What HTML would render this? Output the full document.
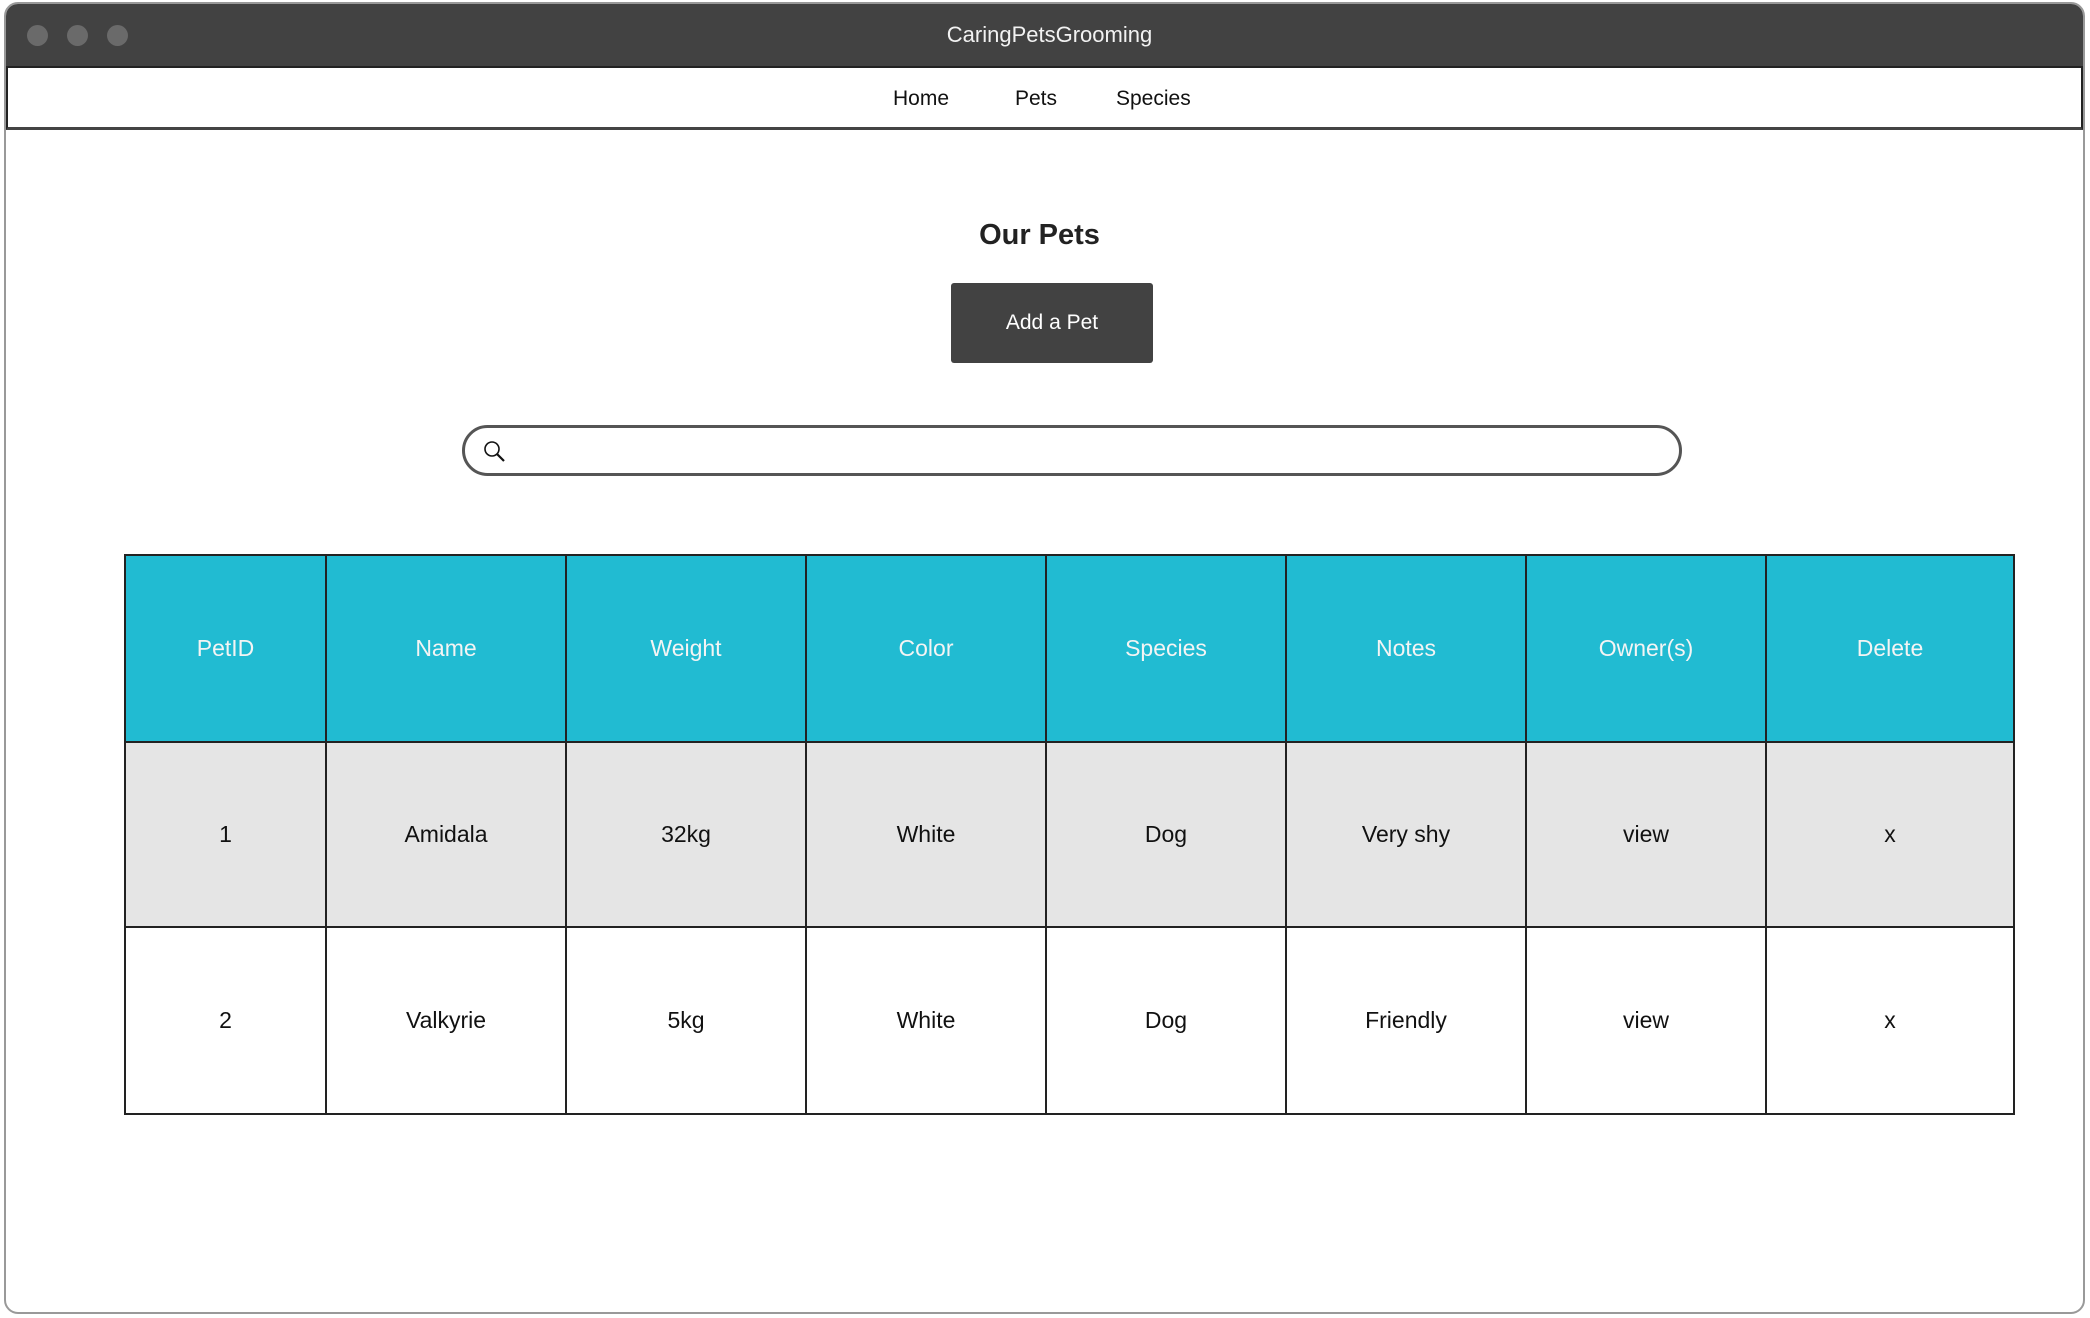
<!DOCTYPE html>
<html><head><meta charset="utf-8"><style>
*{margin:0;padding:0;box-sizing:border-box}
body{width:2090px;height:1318px;background:#fff;position:relative;overflow:hidden;font-family:"Liberation Sans",sans-serif}
.win{position:absolute;left:4px;top:2px;width:2081px;height:1312px;border:2px solid #999;border-radius:14px;overflow:hidden;background:#fff}
.tb{position:absolute;left:0;top:0;right:0;height:64px;background:#424242;border-bottom:2px solid #222}
.dot{position:absolute;top:21px;width:21px;height:21px;border-radius:50%;background:#6a6a6a}
.title{position:absolute;left:0;right:0;top:18px;text-align:center;color:#f2f2f2;font-size:22px;padding-left:10px}
.nav{position:absolute;left:0;right:0;top:64px;height:62px;border-left:2px solid #222;border-right:2px solid #222;border-bottom:3px solid #444}
.nav span{position:absolute;top:19px;font-size:21px;color:#111}
.h{position:absolute;left:0;width:2081px;text-align:center;top:215px;font-size:29px;font-weight:bold;color:#222;padding-right:14px}
.btn{position:absolute;left:945px;top:279px;width:202px;height:80px;background:#424242;border-radius:3px;color:#fff;font-size:21px;text-align:center;line-height:80px}
.search{position:absolute;left:456px;top:421px;width:1220px;height:51px;border:3px solid #555;border-radius:26px}
table{position:absolute;left:118px;top:550px;border-collapse:collapse}
td{border:2px solid #222;text-align:center;font-size:23px;color:#111;padding:0}
tr.hd td{background:#21bbd2;color:#f4f4f4;height:187px}
tr.r1 td{background:#e5e5e5;height:185px}
tr.r2 td{background:#fff;height:187px}
</style></head><body>
<div class="win">
<div class="tb"><div class="dot" style="left:21px"></div><div class="dot" style="left:61px"></div><div class="dot" style="left:101px"></div>
<div class="title">CaringPetsGrooming</div></div>
<div class="nav"><span style="left:885px">Home</span><span style="left:1007px">Pets</span><span style="left:1108px">Species</span></div>
<div class="h">Our Pets</div>
<div class="btn">Add a Pet</div>
<div class="search"><svg style="position:absolute;left:18px;top:12px" width="24" height="24" viewBox="0 0 24 24"><circle cx="9" cy="9" r="7" fill="none" stroke="#111" stroke-width="1.6"/><path d="M14 14l7 7" stroke="#111" stroke-width="2.2"/></svg></div>
<table>
<colgroup><col style="width:201px"><col style="width:240px"><col style="width:240px"><col style="width:240px"><col style="width:240px"><col style="width:240px"><col style="width:240px"><col style="width:248px"></colgroup>
<tr class="hd"><td>PetID</td><td>Name</td><td>Weight</td><td>Color</td><td>Species</td><td>Notes</td><td>Owner(s)</td><td>Delete</td></tr>
<tr class="r1"><td>1</td><td>Amidala</td><td>32kg</td><td>White</td><td>Dog</td><td>Very shy</td><td>view</td><td>x</td></tr>
<tr class="r2"><td>2</td><td>Valkyrie</td><td>5kg</td><td>White</td><td>Dog</td><td>Friendly</td><td>view</td><td>x</td></tr>
</table>
</div>
</body></html>
